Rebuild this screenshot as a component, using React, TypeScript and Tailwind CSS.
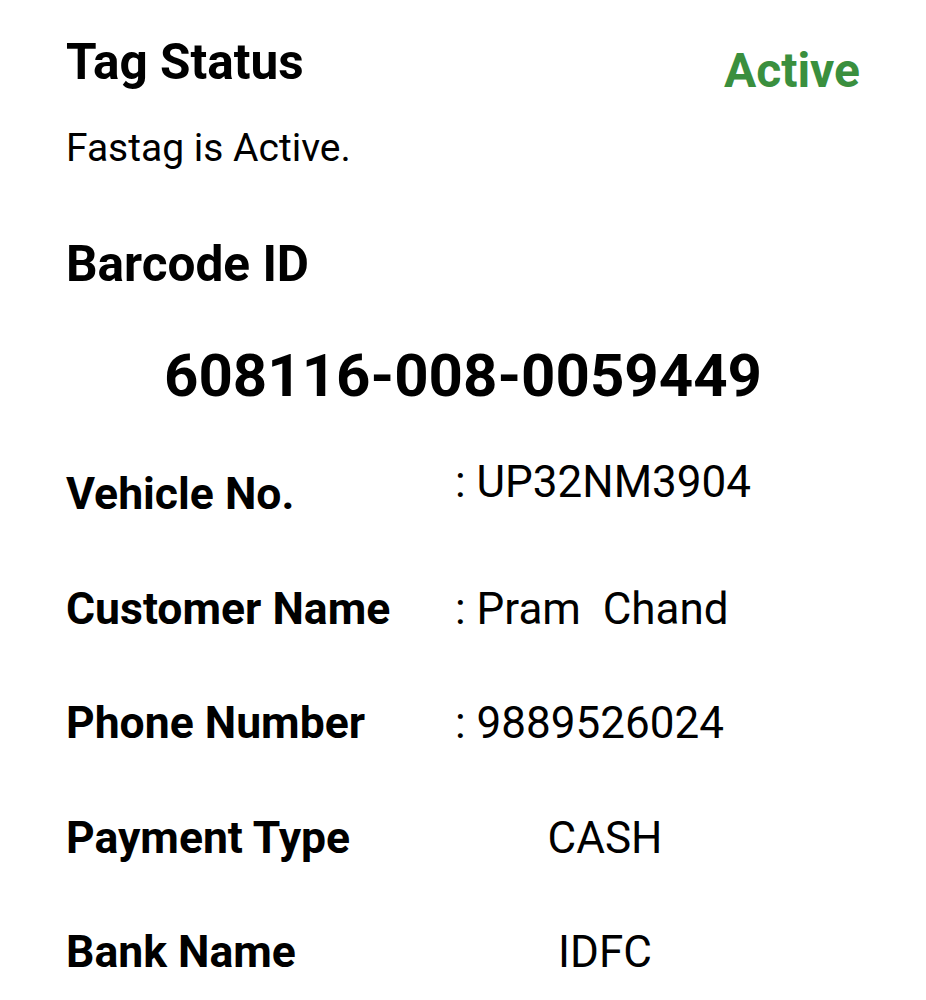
const rows = [
  { label: "Vehicle No.", value: ": UP32NM3904", raised: true },
  { label: "Customer Name", value: ":\u00a0Pram\u00a0\u00a0Chand" },
  { label: "Phone Number", value: ": 9889526024" },
  { label: "Payment Type", value: "CASH", centered: true },
  { label: "Bank Name", value: "IDFC", centered: true }
];

export default function App() {
  return (
    <div
      className="min-h-[1000px] bg-white px-[66px] pt-[32px] text-black"
      style={{ fontFamily: "Roboto, 'Noto Sans', sans-serif" }}
    >
      <div className="flex items-start justify-between">
        <h2 className="text-[49.5px] font-bold leading-[60px]">Tag Status</h2>
        <span className="mt-[9px] text-[48px] font-bold leading-[60px] text-[#3a8f3e]">
          Active
        </span>
      </div>
      <p className="mt-[24px] text-[39px] leading-[46px]">Fastag is Active.</p>

      <h2 className="mt-[64px] text-[49.5px] font-bold leading-[58px]">
        Barcode ID
      </h2>
      <p className="mt-[48px] text-center text-[60px] font-bold leading-[70px]">
        608116-008-0059449
      </p>

      <div className="mt-[58px] flex flex-col gap-[64.5px]">
        {rows.map((row) => (
          <div key={row.label} className="flex items-start">
            <span className="w-[392px] shrink-0 whitespace-nowrap text-[44.5px] font-bold leading-[50px]">
              {row.label}
            </span>
            <span
              className={`w-[294px] shrink-0 whitespace-nowrap text-[44px] leading-[50px] ${
                row.centered ? "text-center" : "-ml-[3px]"
              } ${row.raised ? "-mt-3" : ""}`}
            >
              {row.value}
            </span>
          </div>
        ))}
      </div>
    </div>
  );
}
